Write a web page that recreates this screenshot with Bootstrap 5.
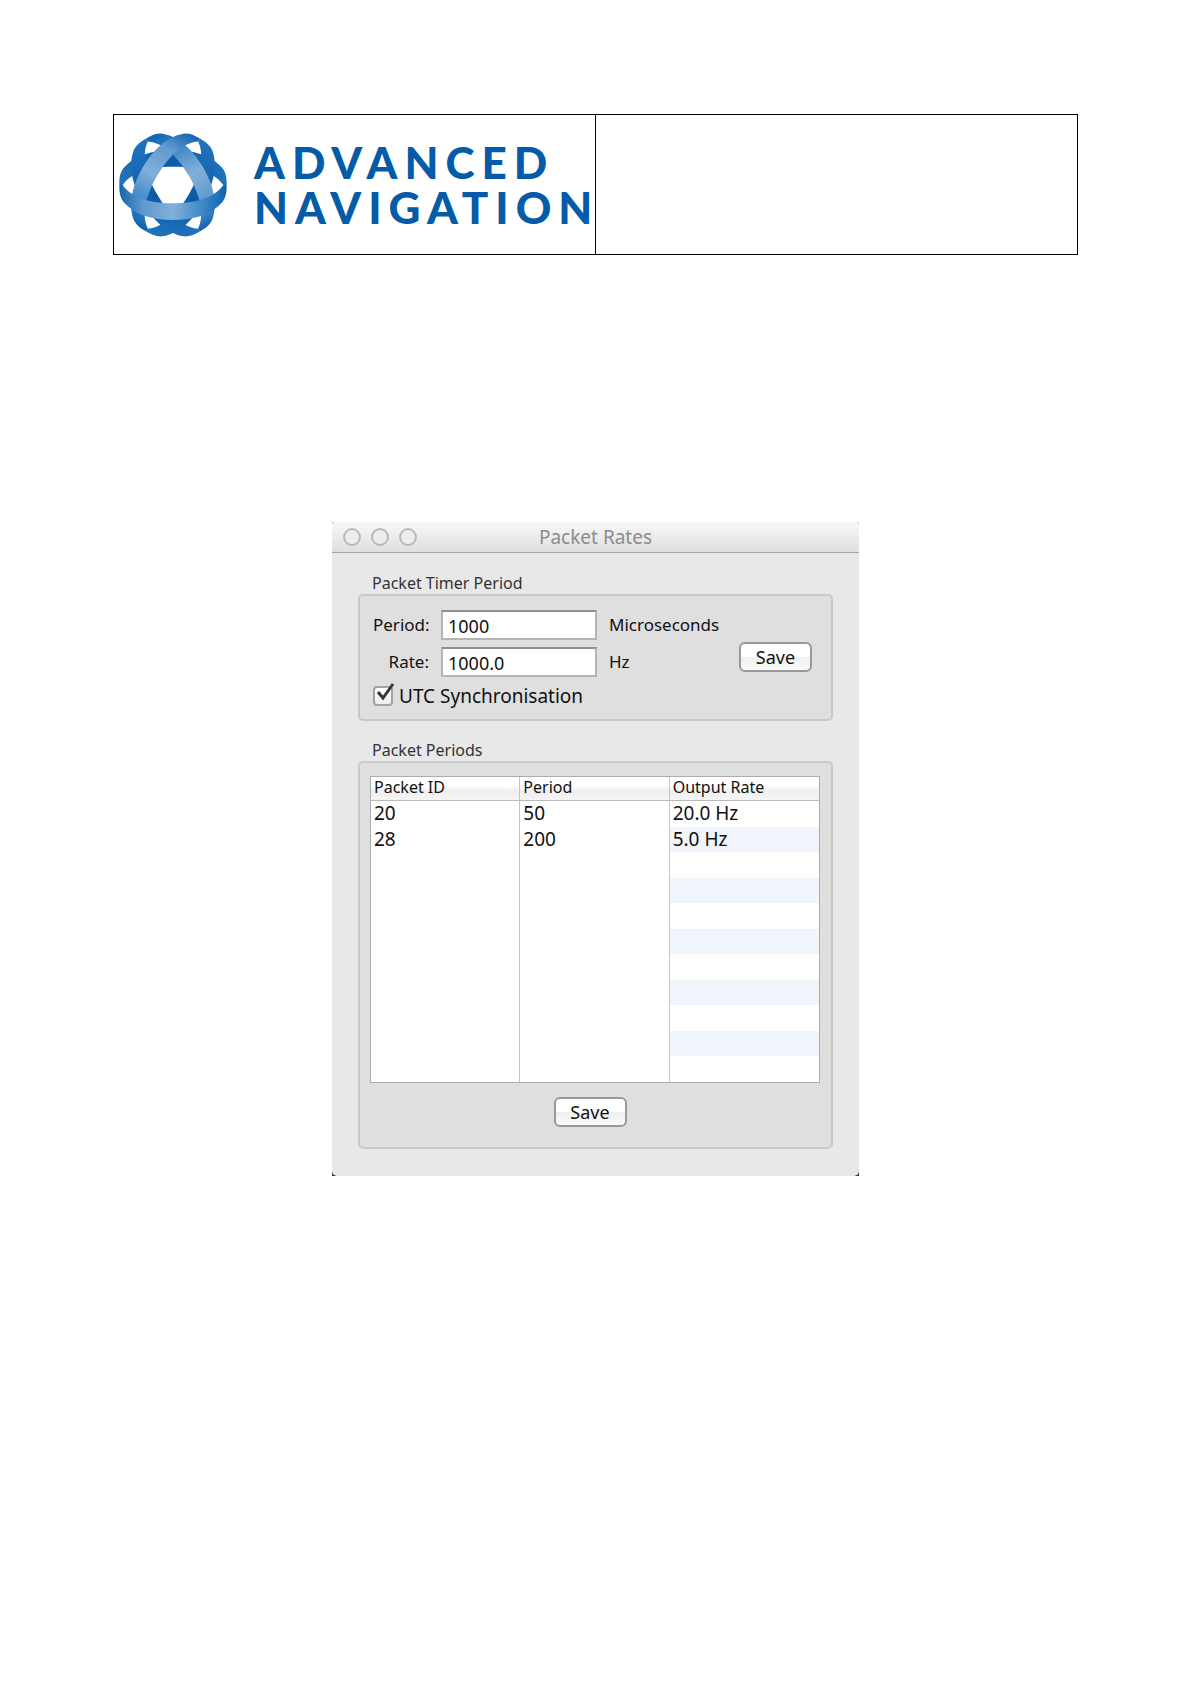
<!DOCTYPE html>
<html lang="en">
<head>
<meta charset="utf-8">
<meta name="viewport" content="width=device-width, initial-scale=1">
<title>Packet Rates</title>
<link href="https://cdn.jsdelivr.net/npm/bootstrap@5.3.0/dist/css/bootstrap.min.css" rel="stylesheet">
<style>
body{background:#fff;color:#111;font-family:"Noto Sans","Open Sans",sans-serif;font-size:17px;line-height:24px}
.sheet{padding:114px 113px 80px}
.letterhead{border:1px solid #000;min-height:141px;margin-bottom:267px}
.letterhead .brand-cell{border-right:1px solid #000;padding-left:5px}
.brand-name{font-family:Lato,sans-serif;font-weight:900;font-size:44px;line-height:45px;color:#045ca8;letter-spacing:7px;white-space:nowrap;margin-left:27px}
.win-back{background:linear-gradient(#c8c8c8 50%,#333 50%);max-width:527px}
.win{background:#e8e8e8;border-radius:5px}
.titlebar{height:31px;border-bottom:1px solid #a6a6a6;background:linear-gradient(#f8f8f8,#dfdfdf);border-radius:4px 4px 0 0;padding:0 11px}
.titlebar .side{width:74px}
.titlebar h1{font-size:19px;line-height:30px;color:#8c8c8c}
.dot{width:18px;height:18px;border:2px solid #b8b8b8;border-radius:50%;background:#ececec}
.win-body{padding:20px 26px 27px}
.group + .group{margin-top:19px}
.group legend{font-size:16px;line-height:21px;color:#333;padding-left:14px}
.panel{background:#dfdfdf;border:2px solid #c9c9c9;border-radius:5px}
.timer{height:127px;padding:14px 19px 11px 13px}
.field-rows{display:grid;gap:7px}
.field-label{width:56px;text-align:right}
.field{width:156px;height:30px;border:2px solid #b4b4b4;border-top-color:#8f8f8f;border-radius:0;padding:2px 5px 0;font-size:18px;line-height:24px;background:#fff;color:#111}
.mac-btn{width:73px;height:30px;border:2px solid #999;border-radius:6px;background:linear-gradient(#fff 0 50%,#f0f0f0 50%,#fafafa);font-size:18px;line-height:24px;padding:0;color:#111}
.tick-label{font-size:19px}
.tick-box{position:relative;width:20px;height:20px;margin-right:6px}
.tick-box input{appearance:none;width:20px;height:20px;margin:0;border:2px solid #a2a2a2;border-radius:4px;background:linear-gradient(#fff,#ededed);display:block}
.tick-box svg{position:absolute;left:2px;top:-4px;pointer-events:none;display:none}
.tick-box input:checked + svg{display:block}
.periods{padding:13px 11px 20px 10px}
.packets{table-layout:fixed;border:1px solid #adadad;border-collapse:separate;border-spacing:0;background:#fff;--bs-table-bg:transparent;color:#111;font-size:19px}
.packets > :not(caption) > * > *{padding:0 3px;border:0;border-right:1px solid #c4c4c4;white-space:nowrap}
.packets > * > * > :last-child{border-right:0}
.packets thead th{font-size:16px;font-weight:400;line-height:20px;height:24px;padding-bottom:3px;border-bottom:1px solid #b9b9b9;background:linear-gradient(#fff 0 40%,#efefef 60%,#f5f5f5)}
.packets td{height:26px;line-height:25px}
.packets tr:nth-child(even) td{height:25px}
.packets tbody tr:nth-child(even) td:last-child{background:#f0f4fb}
.save-row{margin-top:14px;padding-right:10px}
</style>
<script src="https://cdn.jsdelivr.net/npm/bootstrap@5.3.0/dist/js/bootstrap.bundle.min.js"></script>
</head>
<body>
<div class="sheet">
<header class="letterhead row g-0">
  <div class="brand-cell col-6 d-flex align-items-center">
    <svg class="flex-shrink-0" width="108" height="106" viewBox="-162 -159 324 318" aria-hidden="true">
      <defs>
        <linearGradient id="front" gradientUnits="userSpaceOnUse" x1="-161" y1="0" x2="161" y2="0"><stop offset="0" stop-color="#1464af"/><stop offset=".22" stop-color="#5f99cf"/><stop offset=".5" stop-color="#82b0da"/><stop offset=".78" stop-color="#3d87c7"/><stop offset="1" stop-color="#0c63b0"/></linearGradient>
        <linearGradient id="rear" gradientUnits="userSpaceOnUse" x1="-161" y1="0" x2="161" y2="0"><stop offset="0" stop-color="#2373bb"/><stop offset=".5" stop-color="#0b5ba7"/><stop offset="1" stop-color="#1e74bf"/></linearGradient>
        <path id="band" d="M-161 0C-161 20-160 34-149 50C-116 90-58 105 0 105C58 105 116 90 149 50C160 34 161 20 161 0L151 0C130 31 82 55 0 55C-82 55-130 31-151 0Z"/>
      </defs>
      <g fill="url(#rear)">
        <use href="#band" transform="scale(1 -1)"/>
        <use href="#band" transform="rotate(-120) scale(1 -1)"/>
        <use href="#band" transform="rotate(120) scale(1 -1)"/>
      </g>
      <g fill="url(#front)">
        <use href="#band" transform="rotate(-120)"/>
        <use href="#band" transform="rotate(120)"/>
        <use href="#band"/>
      </g>
    </svg>
    <div class="brand-name">ADVANCED<br>NAVIGATION</div>
  </div>
  <div class="col-6"></div>
</header>
<main class="win-back mx-auto">
  <div class="win">
    <div class="titlebar d-flex align-items-center">
      <div class="side d-flex justify-content-between"><span class="dot"></span><span class="dot"></span><span class="dot"></span></div>
      <h1 class="flex-grow-1 text-center m-0 fw-normal">Packet Rates</h1>
      <div class="side"></div>
    </div>
    <div class="win-body">
      <fieldset class="group">
        <legend class="mb-0">Packet Timer Period</legend>
        <div class="panel timer d-flex align-items-center justify-content-between">
          <div class="field-rows">
            <div class="d-flex align-items-center">
              <label class="field-label me-2" for="period">Period:</label>
              <input class="field ms-1 me-2" id="period" type="text" value="1000">
              <span class="ms-1">Microseconds</span>
            </div>
            <div class="d-flex align-items-center">
              <label class="field-label me-2" for="rate">Rate:</label>
              <input class="field ms-1 me-2" id="rate" type="text" value="1000.0">
              <span class="ms-1">Hz</span>
            </div>
            <div class="d-flex align-items-center">
              <span class="tick-box"><input type="checkbox" id="utc" checked><svg width="20" height="20" viewBox="0 0 20 20"><path d="M3 10L8 16L18 2" fill="none" stroke="#383838" stroke-width="3"/></svg></span>
              <label class="tick-label" for="utc">UTC Synchronisation</label>
            </div>
          </div>
          <button class="mac-btn mb-1" type="button">Save</button>
        </div>
      </fieldset>
      <fieldset class="group">
        <legend class="mb-0">Packet Periods</legend>
        <div class="panel periods">
          <table class="table packets mb-0">
            <thead><tr><th scope="col">Packet ID</th><th scope="col">Period</th><th scope="col">Output Rate</th></tr></thead>
            <tbody>
              <tr><td>20</td><td>50</td><td>20.0 Hz</td></tr>
              <tr><td>28</td><td>200</td><td>5.0 Hz</td></tr>
              <tr><td></td><td></td><td></td></tr>
              <tr><td></td><td></td><td></td></tr>
              <tr><td></td><td></td><td></td></tr>
              <tr><td></td><td></td><td></td></tr>
              <tr><td></td><td></td><td></td></tr>
              <tr><td></td><td></td><td></td></tr>
              <tr><td></td><td></td><td></td></tr>
              <tr><td></td><td></td><td></td></tr>
              <tr><td></td><td></td><td></td></tr>
            </tbody>
          </table>
          <div class="save-row text-center"><button class="mac-btn" type="button">Save</button></div>
        </div>
      </fieldset>
    </div>
  </div>
</main>
</div>
</body>
</html>
